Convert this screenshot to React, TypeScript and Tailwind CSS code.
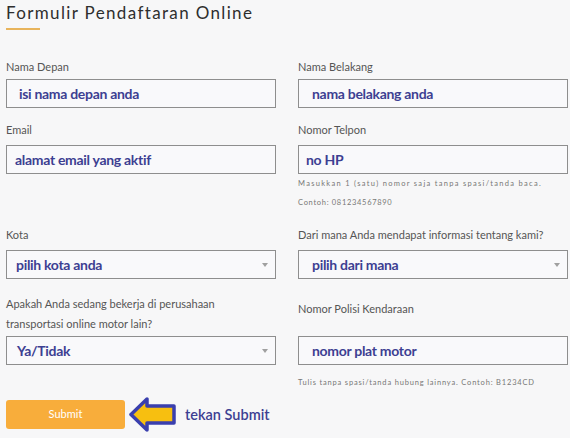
import React from "react";

type FieldProps = {
  label: React.ReactNode;
  value: string;
  select?: boolean;
  pad?: string;
  labelClass?: string;
  children?: React.ReactNode;
};

const Caret = () => (
  <svg width="6" height="4" viewBox="0 0 6 4" className="absolute right-[7px] top-1/2 -translate-y-1/2">
    <path d="M0 0 H6 L3 4 Z" fill="#a0a0a0" />
  </svg>
);

const Field = ({ label, value, select, pad = "pl-3", labelClass = "mb-[2px]", children }: FieldProps) => (
  <div className="flex flex-col">
    <div className={`text-[11px] leading-[20px] text-[#555] ${labelClass}`}>{label}</div>
    <div className={`relative h-[29px] border border-[#8e8e8e] bg-[#f9f9fb] flex items-center ${pad}`}>
      <span className="text-[14px] font-bold text-[#3d3f92] tracking-[-0.3px]">{value}</span>
      {select && <Caret />}
    </div>
    {children}
  </div>
);

const Arrow = () => (
  <svg width="47" height="35" viewBox="0 0 47 35">
    <path
      d="M2 17.5 L18 2 L18 9 L45 9 L45 26 L18 26 L18 33 Z"
      fill="#f7bf10"
      stroke="#3a3fae"
      strokeWidth="3.5"
      strokeLinejoin="round"
    />
  </svg>
);

export default function App() {
  return (
    <div className="w-[570px] h-[438px] bg-[#f7f7f8] overflow-hidden px-[6px] pt-[1px]" style={{ fontFamily: "Lato, 'Open Sans', sans-serif" }}>
      <h1 className="text-[17px] leading-[24px] tracking-[1.35px] text-[#2e2e2e] font-normal">
        Formulir Pendaftaran Online
      </h1>
      <div className="mt-[3px] w-[34px] h-[2px] bg-[#e8b45c]" />

      <div className="mt-[27px] grid grid-cols-[270px_270px] gap-x-[22px]">
        <Field label="Nama Depan" value="isi nama depan anda" />
        <Field label="Nama Belakang" value="nama belakang anda" pad="pl-[13px]" />
      </div>

      <div className="mt-[12px] grid grid-cols-[270px_270px] gap-x-[22px] items-start">
        <Field label="Email" value="alamat email yang aktif" pad="pl-[8px]" labelClass="mb-[5px]" />
        <Field label="Nomor Telpon" value="no HP" pad="pl-[7px]" labelClass="mb-[5px]">
          <div className="mt-[5px] text-[7.5px] leading-[10px] tracking-[1.3px] text-[#777]">
            Masukkan 1 (satu) nomor saja tanpa spasi/tanda baca.
          </div>
          <div className="mt-[9px] text-[7.5px] leading-[10px] tracking-[0.7px] text-[#777]">
            Contoh: 081234567890
          </div>
        </Field>
      </div>

      <div className="mt-[17px] grid grid-cols-[270px_270px] gap-x-[22px]">
        <Field label="Kota" value="pilih kota anda" select pad="pl-[9px]" labelClass="mb-[5px]" />
        <Field label="Dari mana Anda mendapat informasi tentang kami?" value="pilih dari mana" select pad="pl-[13px]" labelClass="mb-[5px]" />
      </div>

      <div className="mt-[15px] grid grid-cols-[270px_270px] gap-x-[22px] items-end">
        <Field
          label={
            <>
              Apakah Anda sedang bekerja di perusahaan
              <br />
              transportasi online motor lain?
            </>
          }
          value="Ya/Tidak"
          select
          pad="pl-[10px]"
          labelClass="mb-[2px]"
        />
        <div className="flex flex-col">
          <div className="text-[11px] leading-[20px] text-[#555] mb-[17px]">Nomor Polisi Kendaraan</div>
          <div className="h-[29px] border border-[#8e8e8e] bg-[#f9f9fb] flex items-center pl-[13px]">
            <span className="text-[14px] font-bold text-[#3d3f92] tracking-[-0.3px]">nomor plat motor</span>
          </div>
        </div>
      </div>
      <div className="grid grid-cols-[270px_270px] gap-x-[22px]">
        <div />
        <div className="mt-[13px] text-[7.5px] leading-[10px] tracking-[0.82px] text-[#777]">
          Tulis tanpa spasi/tanda hubung lainnya. Contoh: B1234CD
        </div>
      </div>

      <div className="mt-[9px] flex items-center">
        <button className="w-[119px] h-[29px] rounded-[3px] bg-[#f8ad3b] text-white text-[11px]">
          Submit
        </button>
        <div className="ml-[4px]">
          <Arrow />
        </div>
        <span className="ml-[9px] text-[14.5px] font-semibold text-[#3d3f92]">tekan Submit</span>
      </div>
    </div>
  );
}
